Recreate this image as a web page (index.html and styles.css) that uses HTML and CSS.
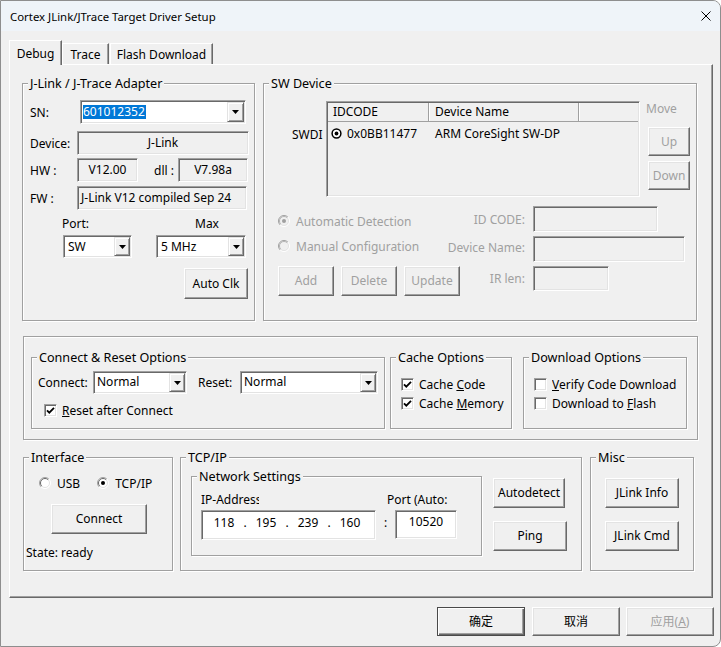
FILE: index.html
```html
<!DOCTYPE html>
<html lang="en">
<head>
<meta charset="utf-8">
<title>Cortex JLink/JTrace Target Driver Setup</title>
<link rel="stylesheet" href="styles.css">
</head>
<body>
<svg class="defs" width="0" height="0" aria-hidden="true">
  <defs>
    <symbol id="tri" viewBox="0 0 7 4"><path d="M0 0H7L3.5 4Z" fill="#000"/></symbol>
    <symbol id="chk" viewBox="0 0 13 13"><path d="M3 6.3 5.3 8.7 10 3.8" fill="none" stroke="#000" stroke-width="1.8"/></symbol>
    <symbol id="rad" viewBox="0 0 12 12">
      <circle cx="6" cy="6" r="5.5" fill="#fff"/>
      <path d="M2.1 9.9A5.5 5.5 0 0 1 9.9 2.1" fill="none" stroke="#a0a0a0"/>
      <path d="M9.9 2.1A5.5 5.5 0 0 1 2.1 9.9" fill="none" stroke="#fff"/>
      <path d="M2.8 9.2A4.5 4.5 0 0 1 9.2 2.8" fill="none" stroke="#696969"/>
      <path d="M9.2 2.8A4.5 4.5 0 0 1 2.8 9.2" fill="none" stroke="#e3e3e3"/>
    </symbol>
    <symbol id="radd" viewBox="0 0 12 12">
      <circle cx="6" cy="6" r="5.5" fill="#f0f0f0"/>
      <path d="M2.1 9.9A5.5 5.5 0 0 1 9.9 2.1" fill="none" stroke="#a0a0a0"/>
      <path d="M9.9 2.1A5.5 5.5 0 0 1 2.1 9.9" fill="none" stroke="#fff"/>
      <path d="M2.8 9.2A4.5 4.5 0 0 1 9.2 2.8" fill="none" stroke="#b4b4b4"/>
      <path d="M9.2 2.8A4.5 4.5 0 0 1 2.8 9.2" fill="none" stroke="#e3e3e3"/>
    </symbol>
  </defs>
</svg>
<div class="window">
  <div class="titlebar">
    <span class="title">Cortex JLink/JTrace Target Driver Setup</span>
    <span class="close"><svg width="10" height="10" viewBox="0 0 10 10"><path d="M0.5 0.5L9.5 9.5M9.5 0.5L0.5 9.5" stroke="#000" stroke-width="1"/></svg></span>
  </div>
  <div class="client">
    <div class="tabs">
      <div class="tab active">Debug</div>
      <div class="tab t-trace">Trace</div>
      <div class="tab t-flash">Flash Download</div>
    </div>
    <div class="page">
      <div class="row1">
        <div class="grp g-jlink">
          <div class="cap">J-Link / J-Trace Adapter</div>
          <div class="jl-row r-sn">
            <span class="lbl l-sn">SN:</span>
            <div class="combo c-sn"><span class="val"><span class="sel">601012352</span></span><span class="dd"><svg width="7" height="4" viewBox="0 0 7 4"><use href="#tri"/></svg></span></div>
          </div>
          <div class="jl-row r-dev">
            <span class="lbl l-47">Device:</span>
            <div class="field f-dev">J-Link</div>
          </div>
          <div class="jl-row r-hw">
            <span class="lbl l-47">HW :</span>
            <div class="field f-hw">V12.00</div>
            <span class="lbl l-dll">dll :</span>
            <div class="field f-dll">V7.98a</div>
          </div>
          <div class="jl-row r-fw">
            <span class="lbl l-47">FW :</span>
            <div class="field f-fw">J-Link V12 compiled Sep 24</div>
          </div>
          <div class="r-portlbl"><span class="pl">Port:</span><span>Max</span></div>
          <div class="r-sel">
            <div class="combo c-port"><span class="val">SW</span><span class="dd"><svg width="7" height="4" viewBox="0 0 7 4"><use href="#tri"/></svg></span></div>
            <div class="combo c-max"><span class="val">5 MHz</span><span class="dd"><svg width="7" height="4" viewBox="0 0 7 4"><use href="#tri"/></svg></span></div>
          </div>
          <div class="r-auto"><div class="btn b-auto">Auto Clk</div></div>
        </div>
        <div class="grp g-sw">
          <div class="cap">SW Device</div>
          <div class="sw-top">
            <span class="swdi">SWDI</span>
            <div class="list">
              <div class="lh"><span class="lc1">IDCODE</span><span class="lc2">Device Name</span><span class="lc3"></span></div>
              <div class="lr">
                <span class="lc1 lrc"><svg width="11" height="11" viewBox="0 0 11 11"><circle cx="5.5" cy="5.5" r="4.4" fill="#fff" stroke="#000" stroke-width="1.5"/><circle cx="5.5" cy="5.5" r="1.9" fill="#000"/></svg><span>0x0BB11477</span></span>
                <span class="lc2 lrc2">ARM CoreSight SW-DP</span>
              </div>
            </div>
            <div class="move-col">
              <span class="dis mv">Move</span>
              <div class="btn dis b-up">Up</div>
              <div class="btn dis b-down">Down</div>
            </div>
          </div>
          <div class="sw-grid">
            <div class="rb dis rb1"><svg width="12" height="12" viewBox="0 0 12 12"><use href="#radd"/><circle cx="6" cy="6" r="2" fill="#a0a0a0"/></svg><span>Automatic Detection</span></div>
            <span class="dis glbl gl1">ID CODE:</span>
            <div class="field f-id"></div>
            <div class="rb dis rb2"><svg width="12" height="12" viewBox="0 0 12 12"><use href="#radd"/></svg><span>Manual Configuration</span></div>
            <span class="dis glbl gl2">Device Name:</span>
            <div class="field f-dn"></div>
            <div class="btnrow">
              <div class="btn dis b-sm">Add</div>
              <div class="btn dis b-sm">Delete</div>
              <div class="btn dis b-sm">Update</div>
            </div>
            <span class="dis glbl gl3">IR len:</span>
            <div class="field f-ir"></div>
          </div>
        </div>
      </div>

      <div class="optbox">
        <div class="grp g-conn">
          <div class="cap">Connect &amp; Reset Options</div>
          <div class="conn-row1">
            <span class="lbl l-conn">Connect:</span>
            <div class="combo c-conn"><span class="val">Normal</span><span class="dd"><svg width="7" height="4" viewBox="0 0 7 4"><use href="#tri"/></svg></span></div>
            <span class="lbl l-reset">Reset:</span>
            <div class="combo c-reset"><span class="val">Normal</span><span class="dd"><svg width="7" height="4" viewBox="0 0 7 4"><use href="#tri"/></svg></span></div>
          </div>
          <div class="cb cb-reset"><span class="box"><svg width="13" height="13" viewBox="0 0 13 13"><use href="#chk"/></svg></span><span><u>R</u>eset after Connect</span></div>
        </div>
        <div class="grp g-cache">
          <div class="cap">Cache Options</div>
          <div class="cb cb1"><span class="box"><svg width="13" height="13" viewBox="0 0 13 13"><use href="#chk"/></svg></span><span>Cache <u>C</u>ode</span></div>
          <div class="cb cb2"><span class="box"><svg width="13" height="13" viewBox="0 0 13 13"><use href="#chk"/></svg></span><span>Cache <u>M</u>emory</span></div>
        </div>
        <div class="grp g-dl">
          <div class="cap">Download Options</div>
          <div class="cb cb1"><span class="box"></span><span class="clip"><u>V</u>erify Code Download</span></div>
          <div class="cb cb2"><span class="box"></span><span>Download to <u>F</u>lash</span></div>
        </div>
      </div>

      <div class="row3">
        <div class="grp g-if">
          <div class="cap">Interface</div>
          <div class="radio-row">
            <div class="rb"><svg width="12" height="12" viewBox="0 0 12 12"><use href="#rad"/></svg><span>USB</span></div>
            <div class="rb rb-tcp"><svg width="12" height="12" viewBox="0 0 12 12"><use href="#rad"/><circle cx="6" cy="6" r="2" fill="#000"/></svg><span>TCP/IP</span></div>
          </div>
          <div class="btn b-connect">Connect</div>
          <div class="state">State: ready</div>
        </div>
        <div class="grp g-tcp">
          <div class="cap">TCP/IP</div>
          <div class="tcp-row">
            <div class="grp g-net">
              <div class="cap">Network Settings</div>
              <div class="net-grid">
                <span class="iplbl">IP-Address</span>
                <span class="portlbl">Port (Auto:</span>
                <div class="ipbox"><span class="oct">118</span><span class="dot">.</span><span class="oct">195</span><span class="dot">.</span><span class="oct">239</span><span class="dot">.</span><span class="oct">160</span></div>
                <span class="colon">:</span>
                <div class="portbox">10520</div>
              </div>
            </div>
            <div class="tcp-btns">
              <div class="btn b-autodet">Autodetect</div>
              <div class="btn b-ping">Ping</div>
            </div>
          </div>
        </div>
        <div class="grp g-misc">
          <div class="cap">Misc</div>
          <div class="btn b-misc">JLink Info</div>
          <div class="btn b-misc b-misc2">JLink Cmd</div>
        </div>
      </div>
    </div>
    <div class="footer">
      <div class="btn fbtn default">确定</div>
      <div class="btn fbtn f2">取消</div>
      <div class="btn fbtn f3 dis">应用(<u>A</u>)</div>
    </div>
  </div>
</div>
</body>
</html>
```

FILE: styles.css
```css
* { box-sizing: border-box; }
html, body { margin: 0; padding: 0; }
body {
  width: 721px;
  height: 647px;
  overflow: hidden;
  background: #fff;
  font-family: "Noto Sans", "Noto Sans CJK SC", sans-serif;
  font-size: 12px;
  color: #000;
}
.defs { position: absolute; width: 0; height: 0; overflow: hidden; }

.window {
  width: 721px;
  height: 647px;
  border: 1px solid #8e8e8e;
  border-radius: 0 8px 8px 0;
  background: #f0f0f0;
  overflow: hidden;
  display: flex;
  flex-direction: column;
}
.titlebar {
  flex: none;
  height: 30px;
  background: #eff4f9;
  display: flex;
  align-items: center;
  padding-left: 9px;
}
.title { font-size: 11.4px; line-height: 16px; white-space: nowrap; margin-top: 1px; }
.close {
  margin-left: auto;
  width: 28px;
  height: 30px;
  display: flex;
  align-items: center;
  justify-content: center;
}
.client {
  flex: 1;
  padding: 9px 7px 0 8px;
  display: flex;
  flex-direction: column;
}

/* tabs */
.tabs {
  flex: none;
  height: 24px;
  display: flex;
  align-items: flex-end;
  position: relative;
  z-index: 1;
}
.tab {
  flex: none;
  height: 21px;
  display: flex;
  align-items: center;
  justify-content: center;
  border: 1px solid;
  border-bottom: 0;
  border-color: #fff #696969 transparent #fff;
  box-shadow: inset -1px 0 0 #a0a0a0;
  background: #f0f0f0;
  white-space: nowrap;
}
.tab.active { width: 53px; height: 25px; margin-bottom: -1px; }
.t-trace { width: 47px; }
.t-flash { width: 103px; margin-left: 1px; }

.page {
  flex: none;
  width: 704px;
  height: 534px;
  border: 1px solid;
  border-color: #fff #696969 #696969 #fff;
  box-shadow: inset -1px -1px 0 #a0a0a0;
}

/* generic widgets */
.grp {
  flex: none;
  border: 1px solid #a0a0a0;
  box-shadow: inset 1px 1px 0 #fff, 1px 1px 0 #fff;
}
.cap {
  width: max-content;
  height: 15px;
  line-height: 15px;
  margin: -8px 0 0 5px;
  padding: 0 2px;
  background: #f0f0f0;
  white-space: nowrap;
  font-size: 12.6px;
}
.lbl { flex: none; line-height: 15px; white-space: nowrap; }
.dis { color: #a0a0a0; }
.field, .combo, .list, .ipbox, .portbox {
  border: 1px solid;
  border-color: #a0a0a0 #fff #fff #a0a0a0;
  box-shadow: inset 1px 1px 0 #696969, inset -1px -1px 0 #e3e3e3;
}
.field {
  flex: none;
  height: 24px;
  display: flex;
  align-items: center;
  justify-content: center;
  padding-bottom: 2px;
  background: #f0f0f0;
  white-space: nowrap;
  overflow: hidden;
}
.combo {
  flex: none;
  display: flex;
  background: #fff;
  padding: 1px;
}
.combo .val {
  flex: 1;
  display: flex;
  align-items: center;
  padding-left: 3px;
  white-space: nowrap;
  overflow: hidden;
}
.combo .dd {
  flex: none;
  width: 16px;
  display: flex;
  align-items: center;
  justify-content: center;
  background: #f0f0f0;
  border: 1px solid;
  border-color: #e3e3e3 #696969 #696969 #e3e3e3;
  box-shadow: inset 1px 1px 0 #fff, inset -1px -1px 0 #a0a0a0;
}
.btn {
  flex: none;
  display: flex;
  align-items: center;
  justify-content: center;
  background: #f0f0f0;
  border: 1px solid;
  border-color: #fff #696969 #696969 #fff;
  box-shadow: inset -1px -1px 0 #a0a0a0, inset 1px 1px 0 #e3e3e3;
  white-space: nowrap;
  padding-bottom: 1px;
}
u { text-underline-offset: 1px; text-decoration-thickness: 1px; }

/* row 1 */
.row1 { display: flex; align-items: flex-start; margin: 18px 0 0 12px; }
.g-jlink { width: 233px; height: 238px; }
.g-sw { width: 434px; height: 238px; margin-left: 8px; }

.jl-row { display: flex; align-items: center; height: 24px; margin-left: 7px; }
.r-sn { margin-top: 9px; }
.r-dev { margin-top: 7px; }
.r-hw { margin-top: 3px; }
.r-fw { margin-top: 4px; }
.l-sn { width: 50px; }
.l-47 { width: 47px; }
.l-dll { width: 24px; margin-left: 16px; }
.c-sn { width: 166px; height: 24px; }
.c-sn .val { padding-left: 1px; }
.c-sn .dd { width: 17px; }
.sel { background: #0078d7; color: #fff; line-height: 14px; padding: 0 1px 0 0; }
.f-dev { width: 172px; }
.f-hw { width: 61px; }
.f-dll { width: 70px; }
.f-fw { width: 170px; justify-content: flex-start; padding-left: 3px; }
.r-portlbl { display: flex; height: 15px; line-height: 15px; margin: 6px 0 0 39px; }
.pl { width: 133px; }
.r-sel { display: flex; margin: 4px 0 0 40px; }
.c-port { width: 69px; height: 23px; }
.c-max { width: 90px; height: 23px; margin-left: 24px; }
.r-auto { display: flex; margin: 10px 0 0 161px; }
.b-auto { width: 64px; height: 31px; }

.sw-top { display: flex; align-items: flex-start; margin-top: 10px; }
.swdi {
  flex: none;
  width: 34px;
  margin: 26px 0 0 28px;
  height: 15px;
  line-height: 15px;
  overflow: hidden;
  white-space: nowrap;
}
.list { flex: none; width: 314px; height: 96px; background: #f0f0f0; padding: 1px; }
.lh { display: flex; height: 19px; border-bottom: 1px solid #a0a0a0; }
.lh span { line-height: 18px; padding-left: 5px; white-space: nowrap; }
.lh .lc1 { width: 101px; border-right: 1px solid #a0a0a0; box-shadow: 1px 0 0 #fff; }
.lh .lc2 { width: 150px; border-right: 1px solid #a0a0a0; box-shadow: 1px 0 0 #fff; padding-left: 6px; }
.lh .lc3 { flex: 1; }
.lr { display: flex; align-items: center; height: 22px; }
.lrc { width: 101px; display: flex; align-items: center; gap: 5px; padding-left: 3px; white-space: nowrap; }
.lrc2 { padding-left: 6px; white-space: nowrap; }
.move-col { flex: none; display: flex; flex-direction: column; margin-left: 6px; }
.mv { line-height: 15px; height: 15px; }
.b-up, .b-down { width: 42px; height: 29px; margin-left: 2px; }
.b-up { margin-top: 11px; }
.b-down { margin-top: 5px; }

.sw-grid {
  display: grid;
  grid-template-columns: 168px 87px 152px;
  grid-template-rows: 26px 26px auto;
  row-gap: 4px;
  margin: 9px 0 0 14px;
}
.rb { display: flex; align-items: center; gap: 6px; height: 16px; white-space: nowrap; }
.rb svg { flex: none; }
.rb1 { margin-top: 7px; }
.rb2 { margin-top: 2px; }
.glbl { justify-self: end; padding-right: 8px; line-height: 16px; white-space: nowrap; }
.gl1 { margin-top: 6px; }
.gl2 { margin-top: 4px; }
.gl3 { margin-top: 5px; }
.f-id { width: 125px; height: 26px; }
.f-dn { width: 152px; height: 26px; }
.f-ir { width: 76px; height: 25px; align-self: start; }
.btnrow { display: flex; gap: 7px; }
.b-sm { width: 56px; height: 30px; }

/* row 2 */
.optbox {
  display: flex;
  align-items: flex-start;
  width: 675px;
  height: 104px;
  margin: 15px 0 0 13px;
  padding: 20px 0 0 7px;
  border: 1px solid #a0a0a0;
  box-shadow: inset 1px 1px 0 #fff, 1px 1px 0 #fff;
}
.g-conn { width: 354px; height: 72px; }
.g-cache { width: 122px; height: 72px; margin-left: 5px; }
.g-dl { width: 164px; height: 72px; margin-left: 11px; }
.conn-row1 { display: flex; align-items: center; height: 23px; margin: 6px 0 0 6px; }
.l-conn { width: 55px; }
.l-reset { width: 42px; margin-left: 11px; }
.c-conn { width: 94px; height: 23px; }
.c-reset { width: 138px; height: 23px; }
.c-conn .val, .c-reset .val { padding-left: 2px; padding-bottom: 2px; }
.cb { display: flex; align-items: center; gap: 5px; height: 16px; white-space: nowrap; }
.cb .box {
  flex: none;
  width: 13px;
  height: 13px;
  background: #fff;
  border: 1px solid;
  border-color: #a0a0a0 #fff #fff #a0a0a0;
  box-shadow: inset 1px 1px 0 #696969, inset -1px -1px 0 #e3e3e3;
}
.cb .box svg { display: block; margin: -1px 0 0 -1px; }
.cb-reset { margin: 8px 0 0 12px; }
.g-cache .cb, .g-dl .cb { margin-left: 10px; }
.cb1 { margin-top: 11px; }
.cb2 { margin-top: 3px; }
.clip { width: 129px; overflow: hidden; }

/* row 3 */
.row3 { display: flex; align-items: flex-start; margin: 17px 0 0 13px; }
.g-if { width: 150px; height: 114px; }
.g-tcp { width: 402px; height: 114px; margin-left: 7px; }
.g-misc { width: 104px; height: 114px; margin-left: 8px; }
.radio-row { display: flex; align-items: center; height: 16px; margin: 10px 0 0 15px; }
.rb-tcp { margin-left: 17px; }
.b-connect { width: 96px; height: 30px; margin: 13px 0 0 27px; }
.state { line-height: 16px; margin: 11px 0 0 2px; white-space: nowrap; }

.tcp-row { display: flex; align-items: flex-start; }
.g-net { width: 291px; height: 80px; margin: 11px 0 0 10px; }
.net-grid {
  display: grid;
  grid-template-columns: 175px 19px 62px;
  grid-template-rows: 15px auto;
  row-gap: 3px;
  margin: 8px 0 0 9px;
}
.iplbl { width: 58px; overflow: hidden; white-space: nowrap; line-height: 15px; }
.portlbl { grid-column: 2 / 4; margin-left: 11px; white-space: nowrap; line-height: 15px; }
.ipbox {
  height: 30px;
  background: #fff;
  display: flex;
  align-items: flex-start;
  padding: 4px 0 0 7px;
}
.oct { width: 30px; text-align: center; line-height: 16px; }
.dot { width: 12px; text-align: center; line-height: 16px; }
.colon { text-align: center; line-height: 16px; margin-top: 5px; }
.portbox {
  height: 29px;
  background: #fff;
  text-align: center;
  line-height: 16px;
  padding-top: 3px;
}
.tcp-btns { display: flex; flex-direction: column; align-items: flex-start; margin: 13px 0 0 11px; }
.b-autodet { width: 72px; height: 30px; }
.b-ping { width: 74px; height: 30px; margin-top: 13px; }
.b-misc { width: 74px; height: 30px; margin: 13px 0 0 14px; }

/* footer */
.footer { display: flex; justify-content: flex-end; margin: 9px -1px 0 0; }
.fbtn { width: 88px; height: 29px; }
.fbtn.default {
  border: 1px solid #4a4a4a;
  box-shadow: inset 1px 1px 0 #fff, inset -1px -1px 0 #696969, inset -2px -2px 0 #a0a0a0;
}
.f2 { margin-left: 7px; }
.f3 { margin-left: 6px; }
```
